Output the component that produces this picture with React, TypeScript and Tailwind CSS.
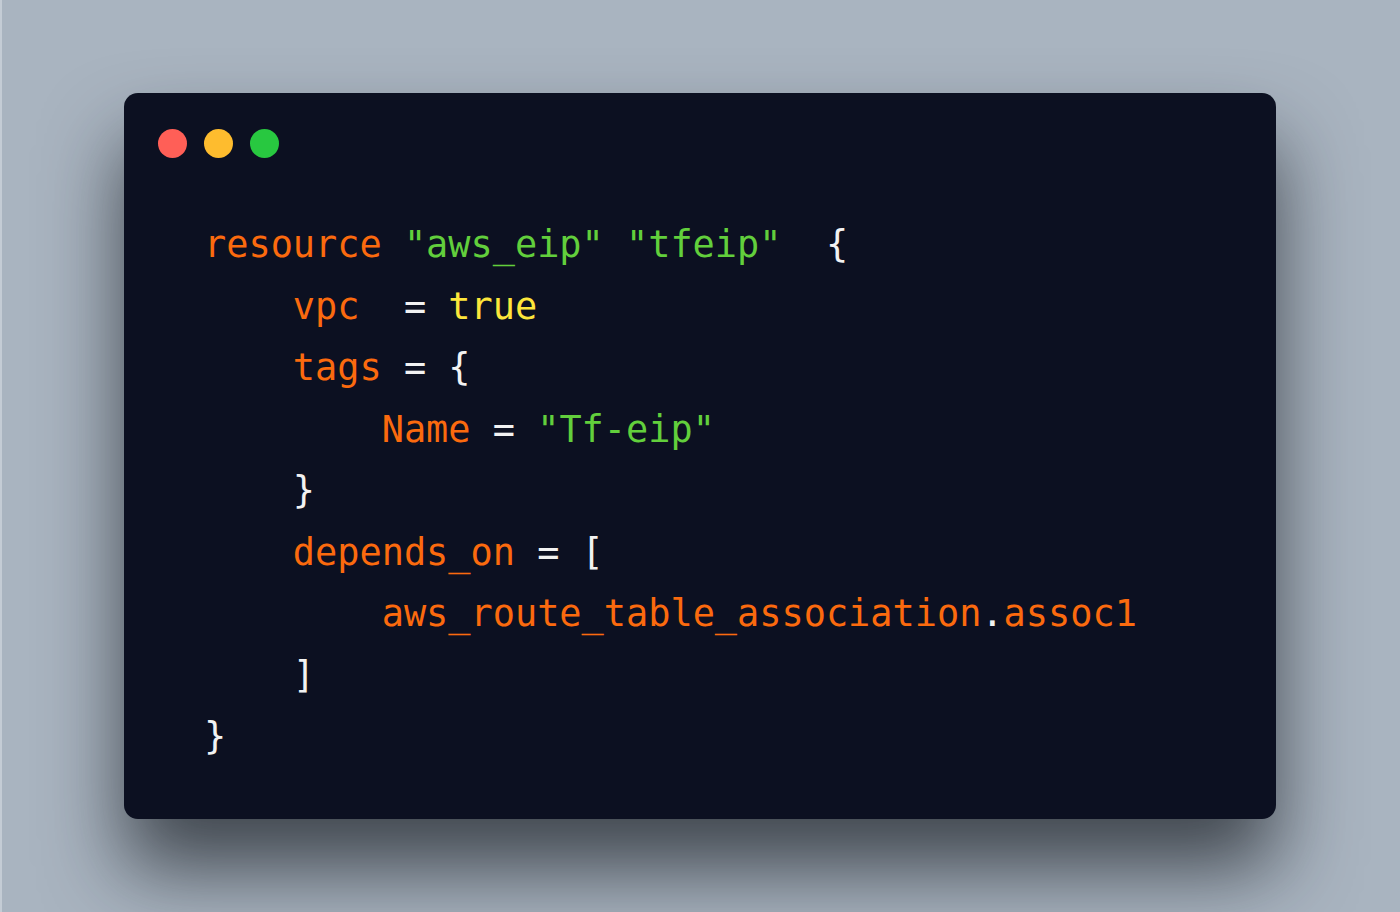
import React from "react";

type Tok = [string, string];

const O = "text-[#fb6a0e]";
const G = "text-[#62cf3c]";
const Y = "text-[#fde63b]";
const W = "text-[#f2f2f2]";

const lines: Tok[][] = [
  [[O, "resource "], [G, '"aws_eip" "tfeip"'], [W, "  {"]],
  [[W, "    "], [O, "vpc"], [W, "  = "], [Y, "true"]],
  [[W, "    "], [O, "tags"], [W, " = {"]],
  [[W, "        "], [O, "Name"], [W, " = "], [G, '"Tf-eip"']],
  [[W, "    }"]],
  [[W, "    "], [O, "depends_on"], [W, " = ["]],
  [[W, "        "], [O, "aws_route_table_association"], [W, "."], [O, "assoc1"]],
  [[W, "    ]"]],
  [[W, "}"]],
];

const App = () => {
  return (
    <div className="w-full h-[912px] flex items-center justify-center bg-[#a9b4c0] shadow-[inset_2px_0_0_#c4ccd5]">
      <div className="w-[1152px] h-[726px] bg-[#0c1021] rounded-[14px] shadow-[0_50px_80px_rgba(20,24,30,0.7)] pt-[129px] pl-[34px] flex flex-col">
        <div className="flex gap-[17px] -mt-[93px]">
          <span className="w-[29px] h-[29px] rounded-full bg-[#ff5f57]" />
          <span className="w-[29px] h-[29px] rounded-full bg-[#febc2e]" />
          <span className="w-[29px] h-[29px] rounded-full bg-[#28c840]" />
        </div>
        <div
          className="mt-[56px] pl-[46px] whitespace-pre text-[36.9px] leading-[61.5px]"
          style={{ fontFamily: '"DejaVu Sans Mono", "Liberation Mono", monospace' }}
        >
          {lines.map((line, i) => (
            <div key={i}>
              {line.map(([c, t], j) => (
                <span key={j} className={c}>
                  {t}
                </span>
              ))}
            </div>
          ))}
        </div>
      </div>
    </div>
  );
};

export default App;
